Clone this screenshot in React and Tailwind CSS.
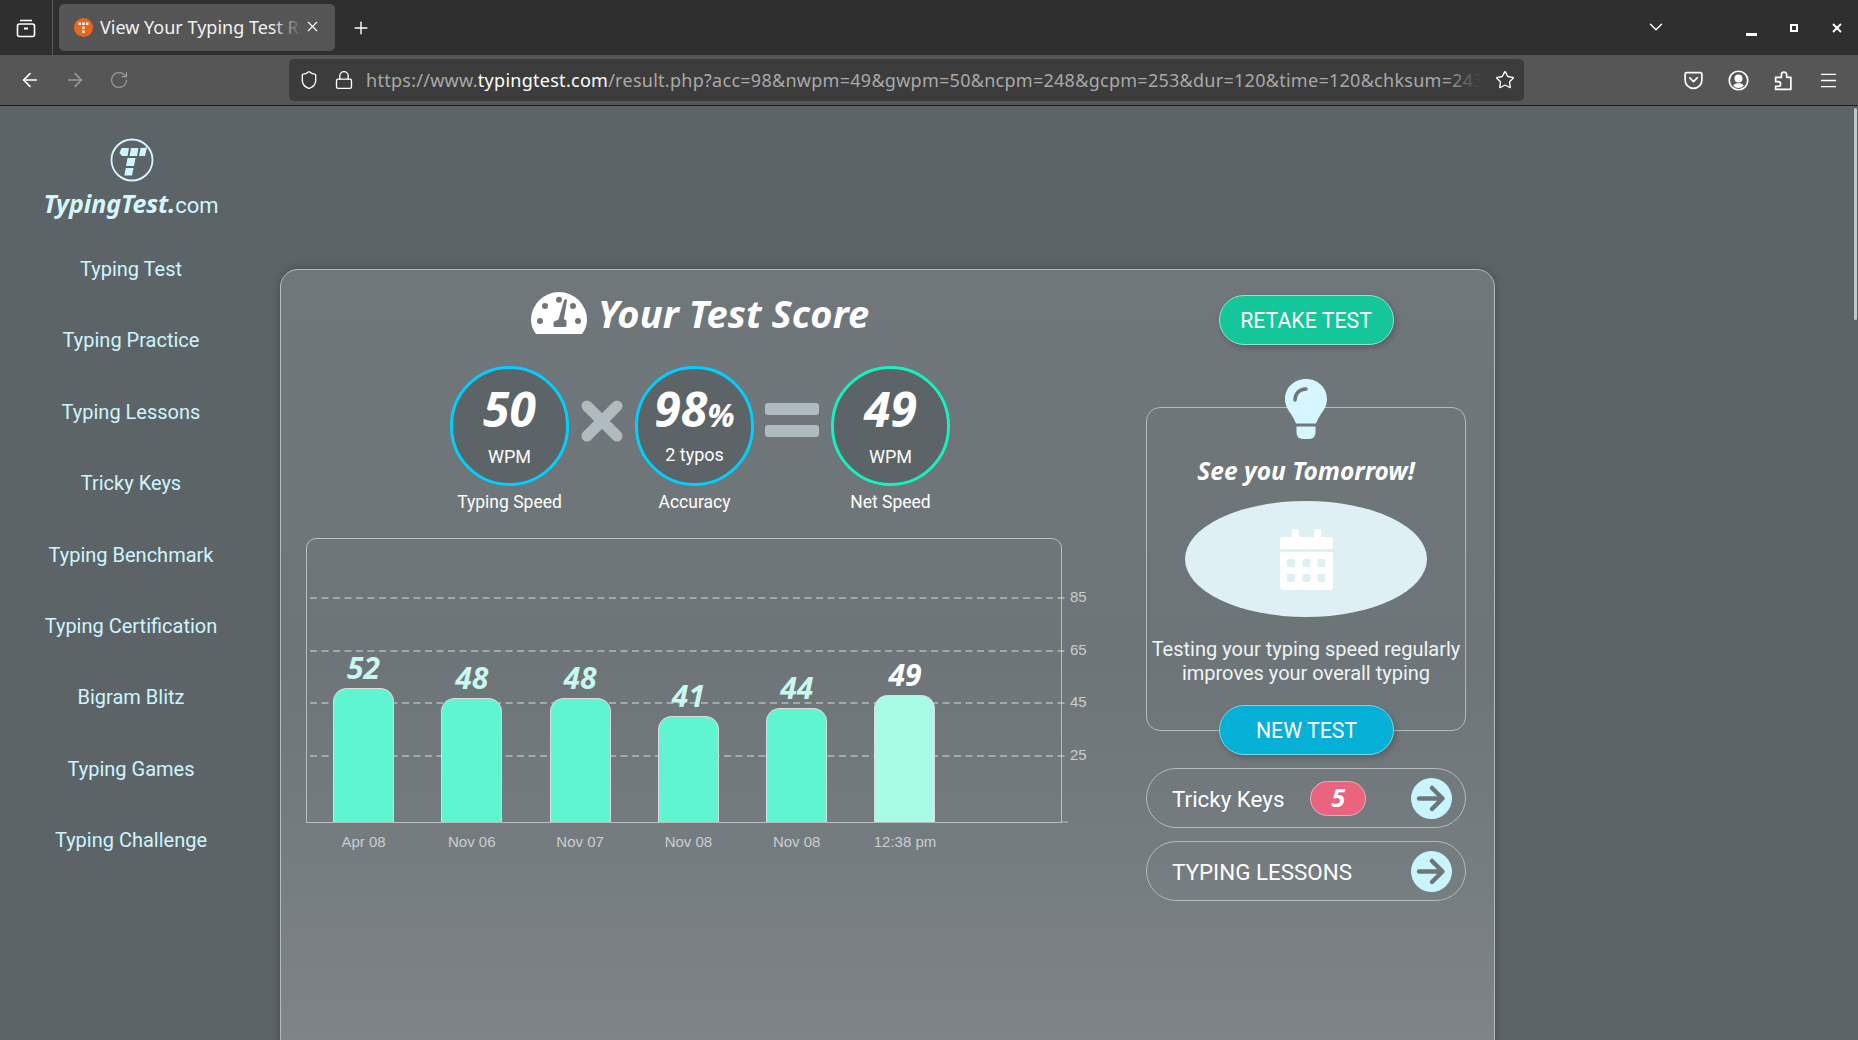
import React from 'react';
import { ArrowLeft, ArrowRight, RotateCw, Shield, Lock, Star, Menu, Plus, X, ChevronDown } from 'lucide-react';

const navItems = ['Typing Test', 'Typing Practice', 'Typing Lessons', 'Tricky Keys', 'Typing Benchmark', 'Typing Certification', 'Bigram Blitz', 'Typing Games', 'Typing Challenge'];

const bars = [
  { value: 52, date: 'Apr 08', height: 134 },
  { value: 48, date: 'Nov 06', height: 124 },
  { value: 48, date: 'Nov 07', height: 124 },
  { value: 41, date: 'Nov 08', height: 106 },
  { value: 44, date: 'Nov 08', height: 114 },
  { value: 49, date: '12:38 pm', height: 127, current: true },
];

const gridLines = [
  { y: 59, label: '85' },
  { y: 112, label: '65' },
  { y: 164, label: '45' },
  { y: 217, label: '25' },
];

const headingFont = "font-['Noto_Sans',sans-serif] italic font-bold";

function TabBar() {
  return (
    <div className="h-[55px] bg-[#2f2f2f] flex items-center relative text-white font-['Noto_Sans',sans-serif]">
      <div className="w-[53px] h-full border-r border-[#5a5a5a] flex items-center justify-center">
        <svg width="20" height="20" viewBox="0 0 20 20" fill="none" stroke="#fff" strokeWidth="1.6">
          <path d="M4 2.5h12" />
          <rect x="1.5" y="6" width="17" height="12.5" rx="2" />
          <path d="M8 10.5h4" strokeWidth="2" />
        </svg>
      </div>
      <div className="ml-[6px] w-[276px] h-[47px] bg-[#555555] rounded-[5px] flex items-center pl-[15px] relative">
        <svg width="19" height="19" viewBox="0 0 19 19" className="shrink-0">
          <circle cx="9.5" cy="9.5" r="9.5" fill="#e8671c" />
          <g fill="#fff">
            <rect x="4.5" y="4.5" width="2.5" height="2.5" />
            <rect x="8.2" y="4.5" width="2.5" height="2.5" />
            <rect x="12" y="4.5" width="2.5" height="2.5" />
            <rect x="8.2" y="8.5" width="2.5" height="2.5" />
            <rect x="8.2" y="12.5" width="2.5" height="2.5" />
          </g>
        </svg>
        <div className="ml-[7px] w-[202px] overflow-hidden whitespace-nowrap text-[18px] text-[#f2f2f2] relative">
          View Your Typing Test Results
          <div className="absolute right-0 top-0 h-full w-[30px] bg-linear-to-r from-transparent to-[#555555]" />
        </div>
        <X size={17} className="ml-[2px] -translate-y-[1px] text-white" strokeWidth={1.6} />
      </div>
      <Plus size={20} strokeWidth={1.7} className="ml-[16px]" />
      <ChevronDown size={22} strokeWidth={1.6} className="absolute left-[1645px] top-[16px]" />
      <div className="ml-auto flex items-center gap-[31px] pr-[15px]">
        <div className="w-[12px] h-[12px] flex items-end justify-center">
          <div className="w-[11px] h-[2.5px] bg-white translate-y-[2px]" />
        </div>
        <div className="w-[12px] flex justify-center">
          <div className="w-[8px] h-[8px] border-[2.5px] border-white" />
        </div>
        <X size={14} strokeWidth={3.2} className="-mx-[1px]" />
      </div>
    </div>
  );
}

function ToolBar() {
  return (
    <div className="h-[51px] bg-[#565656] border-b-[1.5px] border-[#1f1f1f] flex items-center text-white font-['Noto_Sans',sans-serif]">
      <div className="w-[289px] flex items-center pl-[19px] gap-[23px]">
        <ArrowLeft size={22} strokeWidth={1.7} />
        <ArrowRight size={22} strokeWidth={1.7} className="text-[#9a9a9a]" />
        <RotateCw size={20} strokeWidth={1.5} className="text-[#9a9a9a]" />
      </div>
      <div className="w-[1235px] h-[42px] bg-[#3c3c3c] rounded-[5px] flex items-center pl-[10px]">
        <Shield size={20} strokeWidth={1.6} />
        <Lock size={20} strokeWidth={1.6} className="ml-[15px]" />
        <div className="ml-[12px] w-[1115px] overflow-hidden whitespace-nowrap text-[18px] tracking-[0.27px] text-[#a9a9a9] relative">
          https://www.<span className="text-white">typingtest.com</span>/result.php?acc=98&amp;nwpm=49&amp;gwpm=50&amp;ncpm=248&amp;gcpm=253&amp;dur=120&amp;time=120&amp;chksum=2431
          <div className="absolute right-0 top-0 h-full w-[36px] bg-linear-to-r from-transparent to-[#3c3c3c]" />
        </div>
        <Star size={20} strokeWidth={1.6} className="ml-[14px]" />
      </div>
      <div className="flex items-center ml-[159px] gap-[24px]">
        <svg width="21" height="21" viewBox="0 0 20 20" fill="none" stroke="#fff" strokeWidth="1.6" strokeLinecap="round" strokeLinejoin="round">
          <path d="M2 4a1.5 1.5 0 0 1 1.5-1.5h13A1.5 1.5 0 0 1 18 4v5.5a8 8 0 0 1-16 0z" />
          <path d="M6.5 7.5 10 11l3.500-3.500" />
        </svg>
        <svg width="21" height="21" viewBox="0 0 20 20" fill="none" stroke="#fff" strokeWidth="1.6">
          <circle cx="10" cy="10" r="8.800" />
          <circle cx="10" cy="8" r="3" fill="#fff" />
          <path d="M5 15c1-2 3-2.500 5-2.500s4 .5 5 2.500a7 7 0 0 1-10 0z" fill="#fff" stroke="none" />
        </svg>
        <svg width="21" height="21" viewBox="0 0 20 20" fill="none" stroke="#fff" strokeWidth="1.6" strokeLinejoin="round">
          <path d="M2.500 7H8V4.500a2.500 2.500 0 0 1 5 0V7h4v11.500H2.500V15.500H5a2.200 2.200 0 0 0 0-4.500H2.500z" />
        </svg>
        <Menu size={21} strokeWidth={1.6} />
      </div>
    </div>
  );
}

function LogoMark() {
  return (
    <svg width="44" height="44" viewBox="0 0 44 44" className="ml-[2px]">
      <circle cx="22" cy="22" r="20.500" fill="none" stroke="#d8f6ff" strokeWidth="1.800" />
      <g fill="#d0f5ff">
        <polygon points="11.500,10 19,10 17.500,18 12,18 9.500,15" />
        <polygon points="21,10 28.500,10 27,18 19.500,18" />
        <polygon points="30.500,10 37,9.500 35,18 29,18" />
        <polygon points="17.500,20 25.500,20 24,28 16,28" />
        <polygon points="15.800,30 23.500,30 22,37.500 14.300,37.500" />
      </g>
    </svg>
  );
}

function Sidebar() {
  return (
    <aside className="w-[262px] shrink-0 flex flex-col items-center pt-[32px] text-[#cff4ff]">
      <LogoMark />
      <div className="mt-[3px] flex items-baseline h-[34px]">
        <span className={`${headingFont} text-[25px] text-[#d6f6ff] tracking-[-0.1px]`}>TypingTest.</span>
        <span className="text-[22px]">com</span>
      </div>
      <nav className="mt-[35px] flex flex-col items-center gap-[41.400px] text-[20px] leading-[30px]">
        {navItems.map((item) => (
          <a key={item} className="whitespace-nowrap">{item}</a>
        ))}
      </nav>
    </aside>
  );
}

function ScoreCircle({ ring, value, unit, sub, label, subGap }) {
  return (
    <div className="w-[119px] flex flex-col items-center">
      <div className={`w-[119px] h-[120px] rounded-full border-[3.500px] ${ring} bg-[#5c6467] flex flex-col items-center`}>
        <div className={`${headingFont} text-[48px] leading-[56px] mt-[12px] text-white flex items-baseline`}>
          {value}
          {unit && <span className="text-[32px] leading-none">{unit}</span>}
        </div>
        <div className={`text-[18px] leading-[24px] text-white ${subGap}`}>{sub}</div>
      </div>
      <div className="mt-[4px] text-[17.500px] leading-[24px] text-white whitespace-nowrap">{label}</div>
    </div>
  );
}

function GaugeIcon() {
  return (
    <svg width="56" height="42" viewBox="0 0 56 42" className="-translate-y-[1px]">
      <path d="M5 42C1.500 37 0 33 0 28a28 28 0 0 1 56 0c0 5-1.500 9-5 14z" fill="#fff" />
      <g fill="#6e7679">
        <circle cx="14" cy="14" r="3" />
        <circle cx="28" cy="7.700" r="3" />
        <circle cx="42" cy="14" r="3" />
        <circle cx="9" cy="29" r="3" />
        <circle cx="47" cy="29" r="3" />
        <path d="M33 8.500a1.500 1.500 0 0 1 3 .3L32.800 27.500h1.200a1.500 1.500 0 0 1 1.500 1.500v4.500a1.500 1.500 0 0 1-1.500 1.500H24a1.500 1.500 0 0 1-1.500-1.500V31q0-1.500 1.500-2l3.500-1.500z" />
      </g>
    </svg>
  );
}

function Chart() {
  return (
    <div>
      <div className="relative w-[756px] h-[285px] border border-[#b9bebe] rounded-t-[10px]">
        <svg className="absolute left-0 top-0 overflow-visible" width="754" height="283">
          {gridLines.map((line) => (
            <line key={line.y} x1="3" x2="761" y1={line.y} y2={line.y} stroke="#d6dbdb" strokeWidth="1.200" strokeDasharray="7 4.500" />
          ))}
          <line x1="754" x2="761" y1="283" y2="283" stroke="#b9bebe" />
        </svg>
        {gridLines.map((line) => (
          <span key={line.label} className="absolute left-[763px] text-[15px] leading-[20px] text-[#c9cecf] font-['Liberation_Sans',sans-serif]" style={{ top: line.y - 11 }}>
            {line.label}
          </span>
        ))}
        <div className="relative h-full flex items-end pl-[26px] gap-[47.300px]">
          {bars.map((bar, i) => (
            <div key={i} className="w-[61px] flex flex-col items-center">
              <span className={`${headingFont} text-[30px] leading-[30px] mb-[5px] ${bar.current ? 'text-white' : 'text-[#c9f8ee]'}`}>{bar.value}</span>
              <div
                className={`w-full border-[1.500px] border-b-0 border-[#d9dedd] rounded-t-[14px] ${bar.current ? 'bg-[#a8fce6]' : 'bg-[#5ff5d0]'}`}
                style={{ height: bar.height }}
              />
            </div>
          ))}
        </div>
      </div>
      <div className="mt-[9px] flex pl-[27px] gap-[47.300px] text-[15px] leading-[20px] text-[#c9cecf] font-['Liberation_Sans',sans-serif]">
        {bars.map((bar, i) => (
          <div key={i} className="w-[61px] whitespace-nowrap flex justify-center">{bar.date}</div>
        ))}
      </div>
    </div>
  );
}

function ArrowCircle() {
  return (
    <svg width="41" height="41" viewBox="0 0 41 41">
      <circle cx="20.500" cy="20.500" r="20.500" fill="#c8f5ff" />
      <path d="M8 20.500h23M21 10l10.500 10.500L21 31" fill="none" stroke="#6f7679" strokeWidth="4.500" strokeLinecap="round" strokeLinejoin="round" />
    </svg>
  );
}

function PillLink({ label, children }) {
  return (
    <div className="h-[60px] border border-[#b5baba] rounded-full flex items-center pl-[25px] pr-[13px] text-[22.400px] text-white">
      <span className="translate-y-[1.500px]">{label}</span>
      {children}
      <div className="ml-auto"><ArrowCircle /></div>
    </div>
  );
}

function ActionButton({ className, children }) {
  return (
    <div className={`w-[175px] h-[50px] pt-[1px] rounded-full border flex items-center justify-center text-[21.300px] text-white shadow-[2px_3px_6px_rgba(0,0,0,0.2)] ${className}`}>
      {children}
    </div>
  );
}

function RightColumn() {
  return (
    <div className="w-[320px] shrink-0 pt-[25px]">
      <ActionButton className="mx-auto bg-[#14c69a] border-[#8fe6d0]">RETAKE TEST</ActionButton>
      <div className="relative mt-[62px] h-[324px] border border-[#b5baba] rounded-[14px] flex flex-col items-center">
        <svg width="42" height="60" viewBox="0 0 42 60" className="absolute -top-[29px] left-[138px]">
          <path d="M21 0C9.500 0 0 8.500 0 20c0 6 2.500 10 6 15 2 3 3.500 6 5 9.500h20c1.500-3.500 3-6.500 5-9.500 3.500-5 6-9 6-15C42 8.500 32.500 0 21 0z" fill="#d6f7ff" />
          <path d="M11.500 47.500h19V54a6 6 0 0 1-6 6h-7a6 6 0 0 1-6-6z" fill="#d6f7ff" />
          <path d="M10 21c0-6 4-11 11-11" fill="none" stroke="#6f7679" strokeWidth="3.500" strokeLinecap="round" />
        </svg>
        <div className={`${headingFont} mt-[46px] text-[24.500px] leading-[34px] text-white whitespace-nowrap`}>See you Tomorrow!</div>
        <div className="mt-[13px] w-[242px] h-[116px] rounded-[50%] bg-[#dff0f4] flex items-center justify-center">
          <svg width="53" height="61" viewBox="0 0 53 61">
            <rect x="12" y="0" width="7" height="12" rx="2" fill="#fff" />
            <rect x="34" y="0" width="7" height="12" rx="2" fill="#fff" />
            <path d="M3 8h47a3 3 0 0 1 3 3v9H0v-9a3 3 0 0 1 3-3z" fill="#fff" />
            <path d="M0 23h53v34a4 4 0 0 1-4 4H4a4 4 0 0 1-4-4z" fill="#fff" />
            <g fill="#dff0f4">
              <rect x="7" y="30" width="8" height="8" rx="1.500" />
              <rect x="22.500" y="30" width="8" height="8" rx="1.500" />
              <rect x="37.500" y="30" width="8" height="8" rx="1.500" />
              <rect x="7" y="45" width="8" height="8" rx="1.500" />
              <rect x="22.500" y="45" width="8" height="8" rx="1.500" />
              <rect x="37.500" y="45" width="8" height="8" rx="1.500" />
            </g>
          </svg>
        </div>
        <p className="mt-[20px] text-center text-[20px] leading-[24px] text-[#f0f4f4] whitespace-nowrap">
          Testing your typing speed regularly<br />improves your overall typing
        </p>
        <ActionButton className="absolute -bottom-[25px] left-[72px] bg-[#04b0d6] border-[#74d8ee]">NEW TEST</ActionButton>
      </div>
      <div className="mt-[37px] flex flex-col gap-[13px]">
        <PillLink label="Tricky Keys">
          <span className={`${headingFont} ml-[26px] w-[56px] h-[35px] rounded-full bg-[#ea6480] border border-[#e9b0bd] flex items-center justify-center text-[25px] text-white`}>5</span>
        </PillLink>
        <PillLink label="TYPING LESSONS" />
      </div>
    </div>
  );
}

function ScoreCard() {
  return (
    <section className="ml-[18px] mt-[163px] w-[1215px] h-[800px] shrink-0 border border-[#b5baba] rounded-t-[18px] bg-linear-to-b from-[#70777a] via-[#6d7578] via-50% to-[#7f8588] shadow-[0_0_8px_rgba(0,0,0,0.25)] flex pl-[25px]">
      <div className="w-[840px] shrink-0">
        <div className="w-[788px] pt-[23px] flex items-center justify-center gap-[11px]">
          <GaugeIcon />
          <h1 className={`${headingFont} -translate-y-[1px] text-[38px] leading-[42px] tracking-[0.1px] text-white whitespace-nowrap`}>Your Test Score</h1>
        </div>
        <div className="w-[788px] mt-[31px] flex justify-center">
          <ScoreCircle ring="border-[#00cfff]" value="50" sub="WPM" label="Typing Speed" subGap="mt-[8px]" />
          <svg width="42" height="42" viewBox="0 0 42 42" className="mt-[34px] mx-[12px]">
            <path d="M6 6l30 30M36 6 6 36" stroke="#b0bbbf" strokeWidth="11" strokeLinecap="round" />
          </svg>
          <ScoreCircle ring="border-[#00cfff]" value="98" unit="%" sub="2 typos" label="Accuracy" subGap="mt-[6px]" />
          <div className="mt-[37px] ml-[11px] mr-[12px] w-[54px] flex flex-col gap-[10px]">
            <div className="h-[12px] rounded-[3px] bg-[#b0bbbf]" />
            <div className="h-[12px] rounded-[3px] bg-[#b0bbbf]" />
          </div>
          <ScoreCircle ring="border-[#13f2c0]" value="49" sub="WPM" label="Net Speed" subGap="mt-[8px]" />
        </div>
        <div className="mt-[24px]">
          <Chart />
        </div>
      </div>
      <RightColumn />
    </section>
  );
}

export default function App() {
  return (
    <div className="relative w-[1858px] h-[1040px] overflow-hidden bg-[#5c6467] font-['Roboto',sans-serif]">
      <TabBar />
      <ToolBar />
      <main className="flex">
        <Sidebar />
        <ScoreCard />
      </main>
      <div className="absolute right-[1px] top-[108px] w-[3px] h-[212px] rounded-full bg-[#c4c7c8]" />
    </div>
  );
}
